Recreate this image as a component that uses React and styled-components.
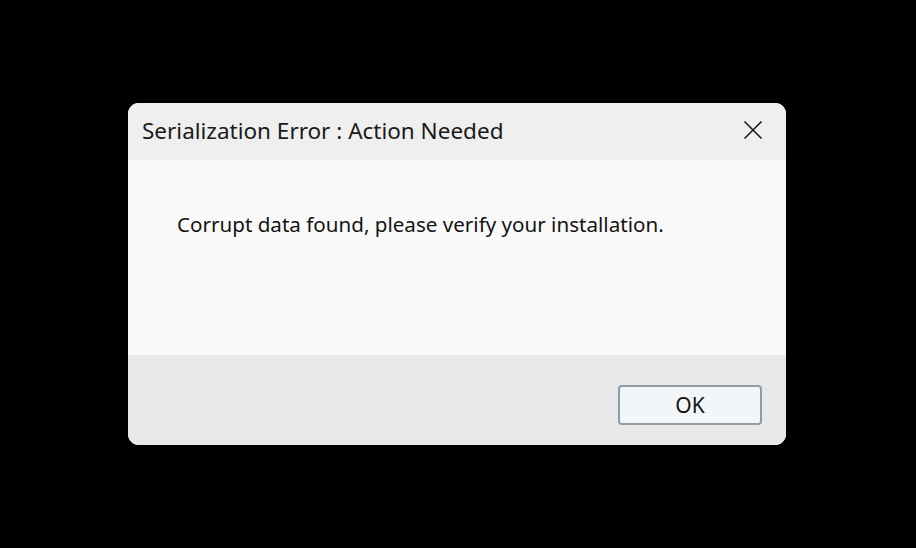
import React from 'react';
import styled, { createGlobalStyle } from 'styled-components';

const GlobalStyle = createGlobalStyle`
  html, body {
    margin: 0;
    padding: 0;
    background: #000;
  }
  body {
    font-family: "Noto Sans", "Open Sans", sans-serif;
  }
`;

const Screen = styled.div`
  width: 916px;
  height: 548px;
  background: #000;
  display: flex;
  align-items: flex-start;
  justify-content: flex-start;
  padding: 103px 0 0 128px;
  box-sizing: border-box;
`;

const Dialog = styled.div`
  width: 658px;
  height: 342px;
  border-radius: 11px;
  overflow: hidden;
  display: flex;
  flex-direction: column;
  background: #f9f9f9;
`;

const TitleBar = styled.div`
  height: 57px;
  display: flex;
  align-items: center;
  justify-content: space-between;
  padding: 0 22px 0 14px;
  background: #efefef;
  flex-shrink: 0;
`;

const Title = styled.span`
  font-size: 22.5px;
  color: #1a1a1a;
  margin-top: -2px;
`;

const CloseButton = styled.button`
  border: none;
  background: transparent;
  padding: 0;
  width: 22px;
  height: 22px;
  display: flex;
  align-items: center;
  justify-content: center;
  margin-top: -3px;
`;

const Body = styled.div`
  flex: 1;
  padding: 50px 0 0 49px;
  background: #f9f9f9;
`;

const Message = styled.p`
  margin: 0;
  font-size: 20.6px;
  color: #141414;
`;

const Footer = styled.div`
  height: 90px;
  flex-shrink: 0;
  background: #e8e8e8;
  display: flex;
  justify-content: flex-end;
  align-items: flex-start;
  padding: 30px 24px 0 0;
  box-sizing: border-box;
`;

const OkButton = styled.button`
  width: 144px;
  height: 40px;
  border: 2px solid #8e9ca6;
  border-radius: 4px;
  background: #f3f6f8;
  font-family: "Noto Sans", "Open Sans", sans-serif;
  font-size: 21px;
  color: #141414;
  padding: 0;
`;

function CloseIcon() {
  return (
    <svg width="20" height="20" viewBox="0 0 20 20">
      <path d="M1.5 1.5 L18.5 18.5 M18.5 1.5 L1.5 18.5" stroke="#1a1a1a" strokeWidth="1.6" fill="none" />
    </svg>
  );
}

export default function App() {
  return (
    <>
      <GlobalStyle />
      <Screen>
        <Dialog>
          <TitleBar>
            <Title>Serialization Error : Action Needed</Title>
            <CloseButton aria-label="Close">
              <CloseIcon />
            </CloseButton>
          </TitleBar>
          <Body>
            <Message>Corrupt data found, please verify your installation.</Message>
          </Body>
          <Footer>
            <OkButton>OK</OkButton>
          </Footer>
        </Dialog>
      </Screen>
    </>
  );
}
